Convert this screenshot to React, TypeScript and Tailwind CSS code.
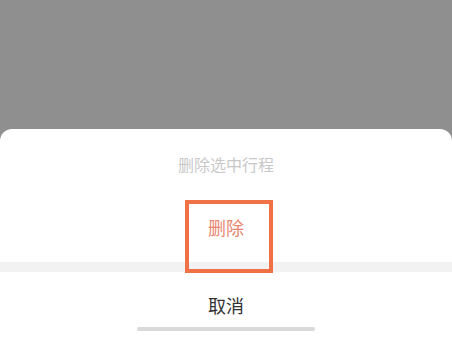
export default function App() {
  return (
    <div
      className="relative flex h-[339px] w-full flex-col justify-end bg-[#8f8f8f]"
      style={{ fontFamily: '"Noto Sans CJK SC", "Noto Sans", sans-serif' }}
    >
      <div className="flex h-[210px] flex-col rounded-t-[12px] bg-white">
        <div className="flex h-[70px] items-center justify-center text-[16px] text-[#c9c9c9]">
          删除选中行程
        </div>
        <div className="flex h-[63px] items-center justify-center pb-[6px] text-[18px] text-[#e9876f]">
          删除
        </div>
        <div className="h-[10px] bg-[#f2f2f2]" />
        <div className="flex flex-1 flex-col items-center pt-[22px]">
          <div className="text-[18px] leading-[22px] text-[#333333]">取消</div>
          <div className="mt-[11px] h-[4px] w-[178px] rounded-full bg-[#d9d9d9]" />
        </div>
      </div>

      {/* annotation highlight */}
      <div className="absolute left-[185px] top-[200px] h-[73px] w-[88px] border-4 border-[#f07145]" />
    </div>
  );
}
